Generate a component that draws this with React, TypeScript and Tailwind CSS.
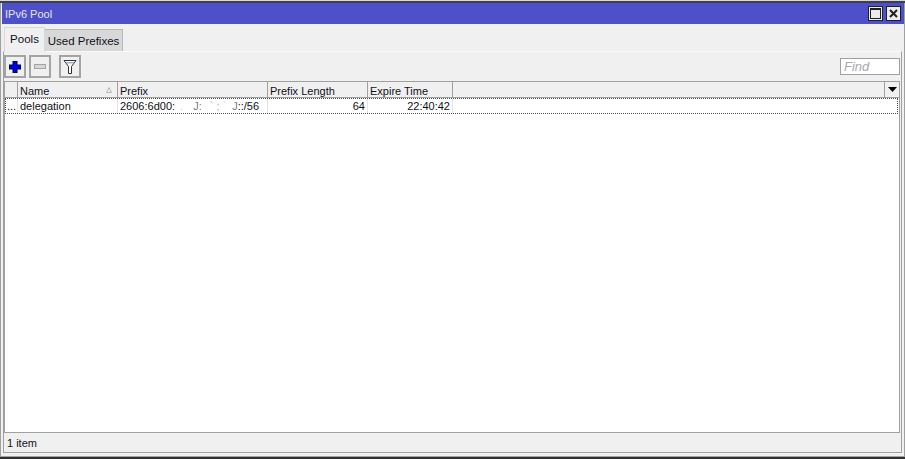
// WinBox style "IPv6 Pool" window
const cell = "flex items-center h-full border-r border-[#a0a0a0] px-[2px] pt-[2px] shrink-0";
const rowCell = "shrink-0 flex items-center border-r border-[#e4e4e4] px-[2px]";

function ToolButton({ children }: { children: React.ReactNode }) {
  return (
    <div className="w-[22px] h-[23px] flex items-center justify-center bg-[#f0f0f0] border-2 border-[#a4a4a4]">
      {children}
    </div>
  );
}

export default function App() {
  return (
    <div className="w-[905px] h-[459px] overflow-hidden bg-[#f0f0f0] flex flex-col text-[11px] leading-[14px] text-[#101018] font-['Liberation_Sans',sans-serif]">
      <div className="h-[1px] shrink-0 bg-[#d8d8d8]" />
      <div className="h-[2px] shrink-0 bg-[#404040]" />

      <div className="flex-1 min-h-0 flex flex-col border-x border-[#a0a0a0] pl-[1px] pb-[3px]">
        {/* title bar */}
        <div className="h-[21px] shrink-0 bg-[#4e50c9] flex items-center justify-between pl-[3px] pr-[3px]">
          <span className="text-[#e4e4f4]">IPv6 Pool</span>
          <div className="flex gap-[3px]">
            <div className="w-[15px] h-[15px] bg-[#ececec] border border-[#202020] flex items-center justify-center">
              <div className="w-[11px] h-[11px] border border-[#202020] border-t-2" />
            </div>
            <div className="w-[15px] h-[15px] bg-[#ececec] border border-[#202020] flex items-center justify-center">
              <svg width="11" height="11" viewBox="0 0 11 11">
                <path d="M2 2 L9 9 M9 2 L2 9" stroke="#202020" strokeWidth="2" />
              </svg>
            </div>
          </div>
        </div>

        {/* tabs */}
        <div className="h-[27px] shrink-0 flex items-end pl-[2px]">
          <div className="h-[25px] w-[41px] -mb-[1px] z-10 bg-[#f0f0f0] border border-b-0 border-[#d8d8d8] flex items-center justify-center pb-[3px] text-[11.5px]">
            Pools
          </div>
          <div className="h-[22px] w-[78px] bg-[#d8d8d8] border-r border-t border-[#b8b8b8] flex items-center justify-center text-[11.5px]">
            Used Prefixes
          </div>
        </div>

        {/* panel */}
        <div className="flex-1 min-h-0 flex flex-col ml-[1px] mr-[2px] border-l border-r border-b border-[#a0a0a0] border-t border-t-[#fafafa]">
          {/* toolbar */}
          <div className="h-[29px] shrink-0 flex items-center pr-[1px]">
            <ToolButton>
              <svg width="14" height="14" viewBox="0 0 14 14">
                <path d="M7 1 V13 M1 7 H13" stroke="#000050" strokeWidth="5" />
                <path d="M7 2 V12 M2 7 H12" stroke="#0000e8" strokeWidth="3" />
              </svg>
            </ToolButton>
            <div className="ml-[3px]">
              <ToolButton>
                <div className="w-[12px] h-[5px] bg-[#d8d8d8] border border-[#a4a4a4]" />
              </ToolButton>
            </div>
            <div className="ml-[8px]">
              <ToolButton>
                <svg width="14" height="16" viewBox="0 0 14 16">
                  <path d="M1 1.5 H13 L8.5 7.5 V14.5 H5.5 V7.5 Z" fill="#ffffff" stroke="#303030" strokeWidth="1" />
                  <path d="M2.5 3 H11.5 L10.5 4.5 H3.5 Z" fill="#9db4cc" />
                </svg>
              </ToolButton>
            </div>
            <div className="ml-auto w-[60px] h-[17px] bg-white border border-[#a0a0a0] flex items-center pl-[3px] italic text-[#a8a8b0] text-[13px]">
              Find
            </div>
          </div>

          {/* table */}
          <div className="flex-1 min-h-0 flex flex-col mr-[1px] border-t border-x border-[#a0a0a0] bg-white">
            <div className="h-[16px] shrink-0 flex bg-[#f0f0f0] border-b border-[#a0a0a0]">
              <div className={`${cell} w-[13px]`} />
              <div className={`${cell} w-[100px] justify-between`}>
                <span>Name</span>
                <svg width="6" height="6" viewBox="0 0 6 6" className="mr-[3px] -mt-[2px]">
                  <path d="M3 0.5 L5.5 5.5 H0.5 Z" fill="none" stroke="#b8b8b8" />
                </svg>
              </div>
              <div className={`${cell} w-[150px]`}>Prefix</div>
              <div className={`${cell} w-[100px]`}>Prefix Length</div>
              <div className={`${cell} w-[85px]`}>Expire Time</div>
              <div className="flex-1" />
              <div className="w-[15px] border-l border-[#a0a0a0] flex items-center justify-center">
                <svg width="9" height="5" viewBox="0 0 9 5">
                  <path d="M0 0 H9 L4.5 5 Z" fill="#000" />
                </svg>
              </div>
            </div>

            <div className="h-[16px] shrink-0 flex mr-[1px] border border-dotted border-[#505050]">
              <div className={`${rowCell} w-[12px] justify-center`}>...</div>
              <div className={`${rowCell} w-[100px]`}>delegation</div>
              <div className={`${rowCell} w-[150px] whitespace-pre`}>
                2606:6d00:
                <span className="ml-[5px] text-[#c8c8c8]">.</span>
                <span className="ml-[10px] text-[#808080]">J:</span>
                <span className="ml-[8px] text-[#b0b0b0]">` ;</span>
                <span className="ml-[3px] text-[#c8c8c8]">`</span>
                <span className="ml-[6px] text-[#808080]">J</span>::/56
              </div>
              <div className={`${rowCell} w-[100px] justify-end`}>64</div>
              <div className={`${rowCell} w-[85px] justify-end`}>22:40:42</div>
            </div>
            <div className="flex-1" />
          </div>

          {/* status bar */}
          <div className="h-[20px] shrink-0 flex items-center pl-[3px] border-t border-[#a0a0a0] mr-[1px]">
            1 item
          </div>
        </div>
      </div>

      <div className="h-[1px] shrink-0 bg-[#a0a0a0]" />
      <div className="h-[2px] shrink-0 bg-[#303030]" />
    </div>
  );
}
